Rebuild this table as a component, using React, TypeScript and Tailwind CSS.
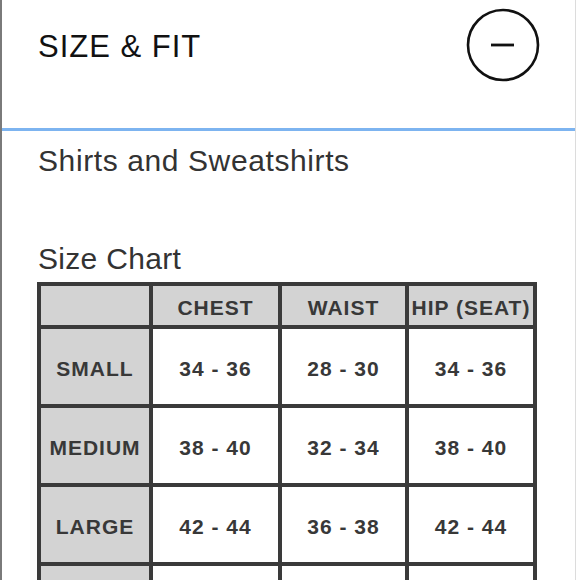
const rows = [
  { size: "SMALL", chest: "34 - 36", waist: "28 - 30", hip: "34 - 36" },
  { size: "MEDIUM", chest: "38 - 40", waist: "32 - 34", hip: "38 - 40" },
  { size: "LARGE", chest: "42 - 44", waist: "36 - 38", hip: "42 - 44" },
]

function MinusCircle() {
  return (
    <svg width="74" height="74" viewBox="0 0 74 74" fill="none">
      <circle cx="37" cy="37" r="35" stroke="#111" strokeWidth="2.6" />
      <line x1="25" y1="37" x2="48" y2="37" stroke="#111" strokeWidth="2.8" />
    </svg>
  )
}

export default function App() {
  const cell = "flex items-center justify-center pt-[4px] font-bold text-[21px] tracking-[1px] text-[#383838]"
  return (
    <div
      className="w-[576px] h-[580px] overflow-hidden bg-white border-l-2 border-l-[#7a7a7a] border-r border-r-[#dcdcdc]"
      style={{ fontFamily: '"Liberation Sans", Arial, sans-serif' }}
    >
      <div className="h-[128px] flex items-start justify-between pl-[36px] pr-[35px] pt-[8px]">
        <div className="h-[76px] flex items-center text-[31px] leading-none tracking-[1px] text-[#111]">
          SIZE &amp; FIT
        </div>
        <MinusCircle />
      </div>
      <div className="h-[3px] bg-[#7db4f0]" />
      <div className="pl-[36px]">
        <div className="mt-[15px] text-[30px] leading-[30px] tracking-[0.6px] text-[#333]">
          Shirts and Sweatshirts
        </div>
        <div className="mt-[68px] text-[30px] leading-[30px] tracking-[0.3px] text-[#333]">
          Size Chart
        </div>
      </div>
      <div className="ml-[35px] mt-[8px] w-[500px] grid grid-cols-[108px_125px_123px_124px] grid-rows-[39px_75px_75px_75px_75px] gap-[4px] p-[4px] bg-[#3a3a3a]">
        <div className="bg-[#d3d3d3]" />
        <div className={`${cell} bg-[#d3d3d3]`}>CHEST</div>
        <div className={`${cell} bg-[#d3d3d3]`}>WAIST</div>
        <div className={`${cell} bg-[#d3d3d3] tracking-[0.8px]`}>HIP (SEAT)</div>
        {rows.map((r) => (
          <div key={r.size} className="contents">
            <div className={`${cell} bg-[#d3d3d3]`}>{r.size}</div>
            <div className={`${cell} bg-white`}>{r.chest}</div>
            <div className={`${cell} bg-white`}>{r.waist}</div>
            <div className={`${cell} bg-white`}>{r.hip}</div>
          </div>
        ))}
        <div className="bg-[#d3d3d3]" />
        <div className="bg-white" />
        <div className="bg-white" />
        <div className="bg-white" />
      </div>
    </div>
  )
}
